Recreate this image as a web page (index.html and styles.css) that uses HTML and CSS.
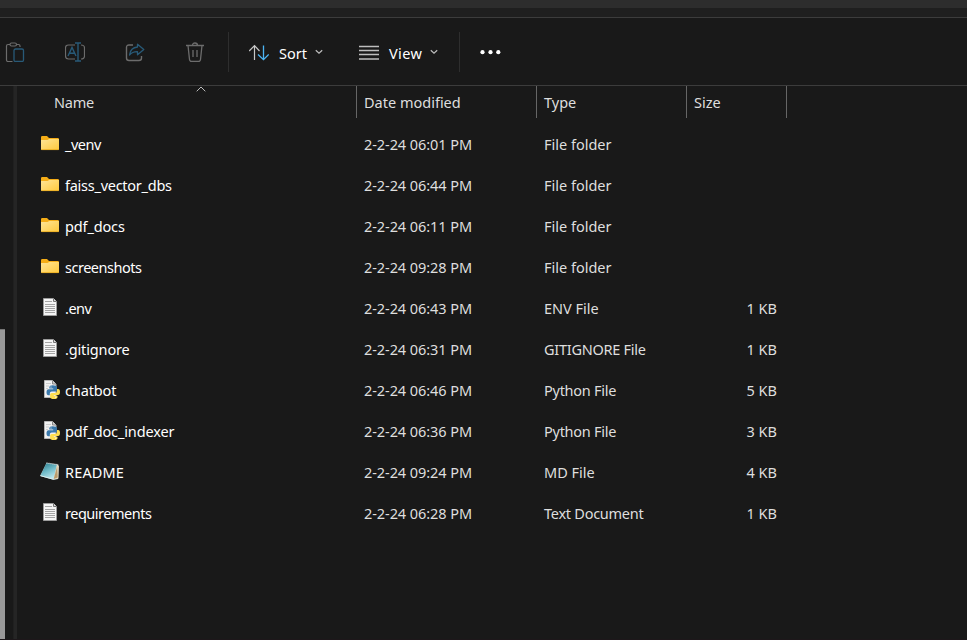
FILE: index.html
```html
<!DOCTYPE html>
<html lang="en">
<head>
<meta charset="utf-8">
<title>File Explorer</title>
<link rel="stylesheet" href="styles.css">
</head>
<body>
<svg class="defs" width="0" height="0">
  <defs>
    <linearGradient id="gold" x1="0" y1="0" x2="1" y2="1"><stop offset="0" stop-color="#ffe597"/><stop offset="1" stop-color="#ffc93c"/></linearGradient>
    <linearGradient id="teal" x1="0.2" y1="0" x2="0.7" y2="1"><stop offset="0" stop-color="#2d7f8f"/><stop offset="0.5" stop-color="#73bdca"/><stop offset="1" stop-color="#c5eaf0"/></linearGradient>
    <symbol id="folder" viewBox="0 0 20 20"><path d="M1 4.2Q1 3 2.2 3H7l2 2h8.8Q19 5 19 6.2V10H1z" fill="#f5ad17"/><path d="M1 7h6.5l1.7-1H19v10.2q0 .8-.8.8H1.8q-.8 0-.8-.8z" fill="url(#gold)"/><path d="M1.4 16.6h17.2" stroke="#e9a91d" stroke-width=".8"/></symbol>
    <symbol id="text" viewBox="0 0 20 20"><path d="M3.500 1.500h10l3 3v14h-13z" fill="#f5f5f5" stroke="#9c9c9c"/><path d="M13.500 1.500v3h3" fill="#ddd" stroke="#777"/><path d="M5 4.500h7M5 7.500h10M5 9.500h10M5 11.500h10M5 13.500h10M5 15.500h10" stroke="#a4a4a4"/></symbol>
    <symbol id="python" viewBox="0 0 20 20"><path d="M4.500 1.500h8l3.500 3.500v13.500H4.500z" fill="#f1f1f1" stroke="#b7b7b7"/><path d="M12.500 1.500V5H16" fill="#ccc" stroke="#888"/><path d="M6 4.500h5M6 7h3M6 9.500h2" stroke="#ccc"/><path d="M12.800 6.200q-3.500 0-3.500 2v1.300h3.900v.7H8.600q-2.100 0-2.100 3 0 3 2 3h1.300v-1.800q0-2 2-2h3.600q1.500 0 1.500-1.500V8.100q0-1.900-4.100-1.900z" fill="#3a79ac"/><path d="M14 20q3.500 0 3.500-2v-1.200h-3.700v-.7h4.300q1.900 0 1.900-3 0-3-1.800-3H17v1.800q0 2-2 2h-3.300q-1.600 0-1.600 1.500V18q0 2 3.900 2z" fill="#ffdf50"/><circle cx="11" cy="8" r=".6" fill="#fff"/><circle cx="15.800" cy="18.200" r=".6" fill="#fff"/></symbol>
    <symbol id="notepad" viewBox="0 0 20 20"><path d="M6.500 2 18.500 3.500 18 18l-4 1L0 15z" fill="#b6c0bd"/><path d="M6.500 2 17 3.800 13.700 18 .5 14.500z" fill="url(#teal)"/><path d="M17 3.800 18.800 5l-.4 12.500-4.700.5z" fill="#f0e5cc"/><path d="m17.200 5 .6 11.500-4.100 1.500z" fill="#b99b6c"/><path d="m6.500 2 11 1.600" stroke="#d0d5d5" stroke-width="1.300" stroke-dasharray="1 1"/><path d="m.5 14.700 13.200 3.600" stroke="#d9f0f3"/></symbol>
    <symbol id="chevron" viewBox="0 0 8 6"><path d="m.8 1.200 3.200 3 3.200-3" fill="none" stroke="#bdbdbd" stroke-width="1.200"/></symbol>
  </defs>
</svg>
<div class="window">
  <div class="titlebar"></div>
  <div class="addressbar"></div>
  <header class="toolbar">
    <svg class="tool" viewBox="0 0 20 20"><g fill="none" stroke="#6c6c6c" stroke-width="1.200"><path d="M5 2.500H3Q1.500 2.500 1.500 4v14q0 1.500 1.500 1.500h4.500M11.500 2.500h2Q15 2.500 15 4v1"/><rect x="5" y="1" width="6.500" height="3" rx="1.500"/></g><rect x="9" y="7" width="9.500" height="12.500" rx="1.500" fill="none" stroke="#285a78" stroke-width="1.300"/></svg>
    <svg class="tool" viewBox="0 0 20 20"><path d="M10 3H3.500Q.5 3 .5 6v8q0 3 3 3H10M16 3q3.500 0 3.500 3v8q0 3-3.500 3" fill="none" stroke="#6c6c6c" stroke-width="1.200"/><path d="M13 1v18M10 1h6M10 19h6M3 14l4-8.500L11 14M4.300 11.300h5.200" fill="none" stroke="#285a78" stroke-width="1.400"/></svg>
    <svg class="tool" viewBox="0 0 20 20"><path d="M8 3H4Q1.500 3 1.500 5.500V16q0 2.500 2.500 2.500h10q2.500 0 2.500-2.500v-2" fill="none" stroke="#6c6c6c" stroke-width="1.400"/><path d="M12.500 2.200 18.800 7.500l-6.300 5.300V9.700Q7.500 9.500 4.500 13 5.500 5.500 12.500 5z" fill="none" stroke="#285a78" stroke-width="1.300" stroke-linejoin="round"/></svg>
    <svg class="tool" viewBox="0 0 20 20"><path d="M1 3.500h18M3 3.500l1.500 14q.2 2 2 2h7q1.800 0 2-2l1.500-14M7.500 3.500q0-2.500 2.500-2.500t2.500 2.500M8 8v7M12 8v7" fill="none" stroke="#6c6c6c" stroke-width="1.300"/></svg>
    <span class="rule"></span>
    <div class="command sort">
      <svg class="tool" viewBox="0 0 20 20"><path d="M5.500 18V3.500M.2 9l5.300-5.300L10.500 9" fill="none" stroke="#c8c8c8" stroke-width="1.200"/><path d="M14.500 3.500V18M9 12.500l5.500 5.200 5.200-5.200" fill="none" stroke="#4cb5f5" stroke-width="1.300"/></svg>
      <span class="label">Sort</span><svg class="chev"><use href="#chevron"/></svg>
    </div>
    <div class="command view">
      <svg class="tool" viewBox="0 0 20 20"><path d="M0 4.500h20M0 8.500h20M0 12.500h20M0 17h20" stroke="#bebebe" stroke-width="1.400"/></svg>
      <span class="label">View</span><svg class="chev"><use href="#chevron"/></svg>
    </div>
    <span class="rule second"></span>
    <svg class="more" viewBox="0 0 22 6"><g fill="#fff"><circle cx="2.500" cy="3.200" r="2.100"/><circle cx="10.500" cy="3.200" r="2.100"/><circle cx="18.300" cy="3.200" r="2.100"/></g></svg>
  </header>
  <div class="body">
    <aside class="nav"><div class="thumb"></div></aside>
    <div class="splitter"></div>
    <main class="files">
      <div class="grid head">
        <div class="cell"><span class="t-name">Name</span><svg class="caret" viewBox="0 0 10 6"><path d="m.7 5.300 4.300-4.300 4.300 4.300" fill="none" stroke="#bdbdbd"/></svg></div>
        <div class="cell">Date modified</div><div class="cell">Type</div><div class="cell">Size</div>
      </div>
      <div class="grid row"><div class="name"><svg><use href="#folder"/></svg><span class="tighter">_venv</span></div><div class="date">2-2-24 06:01 PM</div><div class="type">File folder</div><div class="size"></div></div>
      <div class="grid row"><div class="name"><svg><use href="#folder"/></svg><span class="tight">faiss_vector_dbs</span></div><div class="date">2-2-24 06:44 PM</div><div class="type">File folder</div><div class="size"></div></div>
      <div class="grid row"><div class="name"><svg><use href="#folder"/></svg><span class="snug">pdf_docs</span></div><div class="date">2-2-24 06:11 PM</div><div class="type">File folder</div><div class="size"></div></div>
      <div class="grid row"><div class="name"><svg><use href="#folder"/></svg><span class="tighter">screenshots</span></div><div class="date">2-2-24 09:28 PM</div><div class="type">File folder</div><div class="size"></div></div>
      <div class="grid row"><div class="name"><svg><use href="#text"/></svg><span class="tighter">.env</span></div><div class="date">2-2-24 06:43 PM</div><div class="type">ENV File</div><div class="size">1 KB</div></div>
      <div class="grid row"><div class="name"><svg><use href="#text"/></svg><span class="snug">.gitignore</span></div><div class="date">2-2-24 06:31 PM</div><div class="type tight">GITIGNORE File</div><div class="size">1 KB</div></div>
      <div class="grid row"><div class="name"><svg><use href="#python"/></svg><span class="snug">chatbot</span></div><div class="date">2-2-24 06:46 PM</div><div class="type tight">Python File</div><div class="size">5 KB</div></div>
      <div class="grid row"><div class="name"><svg><use href="#python"/></svg><span class="snug">pdf_doc_indexer</span></div><div class="date">2-2-24 06:36 PM</div><div class="type tight">Python File</div><div class="size">3 KB</div></div>
      <div class="grid row"><div class="name"><svg><use href="#notepad"/></svg><span class="loose">README</span></div><div class="date">2-2-24 09:24 PM</div><div class="type">MD File</div><div class="size">4 KB</div></div>
      <div class="grid row"><div class="name"><svg><use href="#text"/></svg><span class="tighter">requirements</span></div><div class="date">2-2-24 06:28 PM</div><div class="type tight">Text Document</div><div class="size">1 KB</div></div>
    </main>
  </div>
</div>
</body>
</html>
```
FILE: styles.css
```css
* { box-sizing: border-box; }
body { margin: 0; background: #191919; color: #dedede; font: 14.5px/20px "Noto Sans", sans-serif; overflow: hidden; }
.defs { position: absolute; }
svg { display: block; flex: none; }
.window { height: 640px; display: flex; flex-direction: column; }
.titlebar { height: 8px; background: #2d2d2d; }
.addressbar { height: 10px; background: #1f1f1f; border-bottom: 1px solid #3c3c3c; }
.toolbar { height: 68px; display: flex; align-items: center; padding-left: 5px; border-bottom: 1px solid #3c3c3c; }
.tool { width: 20px; height: 20px; }
.toolbar > .tool { margin-right: 40px; }
.rule { width: 1px; height: 40px; background: #2e2e2e; margin-left: -17px; }
.command { display: flex; align-items: center; color: #fff; }
.command .label { margin-top: 2px; }
.sort { margin-left: 20px; width: 110px; }
.sort .label { margin-left: 10px; width: 29px; }
.view { width: 100px; }
.view .label { margin-left: 10px; width: 34px; letter-spacing: .35px; }
.chev { width: 8px; height: 6px; margin-left: 7px; }
.rule.second { margin-left: 0; }
.more { width: 22px; height: 6px; margin-left: 20px; }
.body { flex: 1; display: flex; min-height: 0; border-bottom: 1px solid #1d171a; }
.nav { width: 13px; padding-top: 243px; }
.thumb { width: 5px; height: 100%; background: #999; border-top: 1px solid #777; }
.splitter { width: 4px; background: #252525; border-left: 1px solid #202020; }
.files { flex: 1; }
.grid { display: grid; grid-template-columns: 340px 180px 150px 100px; }
.head { height: 38px; align-items: start; }
.head .cell { height: 32px; border-right: 1px solid #666; padding: 6px 0 0 7px; }
.head .cell:first-child { padding-left: 37px; display: flex; }
.t-name { width: 41px; letter-spacing: -.2px; }
.caret { width: 10px; height: 6px; margin: -6px 0 0 101px; }
.row { height: 41px; align-items: center; }
.name { display: flex; align-items: center; color: #fff; padding-left: 23px; gap: 5px; }
.name svg { width: 20px; height: 20px; margin-top: -3px; }
.name span { margin-top: -2px; }
.date, .type { padding-left: 7px; margin-top: -2px; white-space: nowrap; }
.date { letter-spacing: -.07px; }
.size { text-align: right; padding-right: 10px; margin-top: -2px; }
.snug { letter-spacing: -.14px; }
.tight { letter-spacing: -.26px; }
.tighter { letter-spacing: -.48px; }
.loose { letter-spacing: .15px; }
```
